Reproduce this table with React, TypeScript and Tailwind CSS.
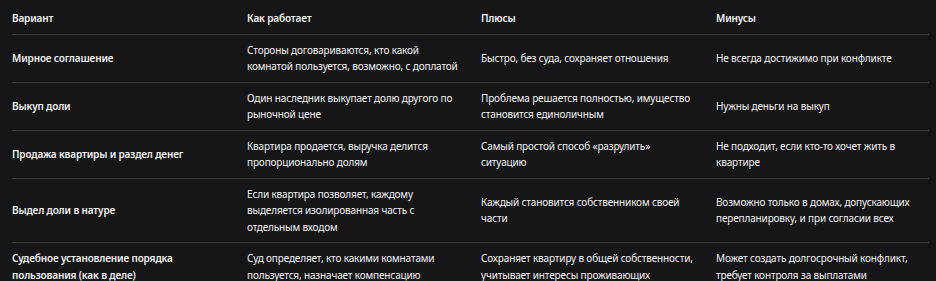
import React from 'react'

// each cell is a list of lines, matching the wrapping in the original view
type Cell = string[]

type Row = {
  variant: Cell
  how: Cell
  pros: Cell
  cons: Cell
}

const rows: Row[] = [
  {
    variant: ['Мирное соглашение'],
    how: ['Стороны договариваются, кто какой', 'комнатой пользуется, возможно, с доплатой'],
    pros: ['Быстро, без суда, сохраняет отношения'],
    cons: ['Не всегда достижимо при конфликте'],
  },
  {
    variant: ['Выкуп доли'],
    how: ['Один наследник выкупает долю другого по', 'рыночной цене'],
    pros: ['Проблема решается полностью, имущество', 'становится единоличным'],
    cons: ['Нужны деньги на выкуп'],
  },
  {
    variant: ['Продажа квартиры и раздел денег'],
    how: ['Квартира продается, выручка делится', 'пропорционально долям'],
    pros: ['Самый простой способ «разрулить»', 'ситуацию'],
    cons: ['Не подходит, если кто-то хочет жить в', 'квартире'],
  },
  {
    variant: ['Выдел доли в натуре'],
    how: ['Если квартира позволяет, каждому', 'выделяется изолированная часть с', 'отдельным входом'],
    pros: ['Каждый становится собственником своей', 'части'],
    cons: ['Возможно только в домах, допускающих', 'перепланировку, и при согласии всех'],
  },
  {
    variant: ['Судебное установление порядка', 'пользования (как в деле)'],
    how: ['Суд определяет, кто какими комнатами', 'пользуется, назначает компенсацию'],
    pros: ['Сохраняет квартиру в общей собственности,', 'учитывает интересы проживающих'],
    cons: ['Может создать долгосрочный конфликт,', 'требует контроля за выплатами'],
  },
]

const headers = ['Вариант', 'Как работает', 'Плюсы', 'Минусы']

function Lines({ lines }: { lines: Cell }) {
  return (
    <>
      {lines.map((l) => (
        <span key={l} className="block whitespace-nowrap">
          {l}
        </span>
      ))}
    </>
  )
}

export default function App() {
  return (
    <div
      className="w-[936px] h-[281px] overflow-hidden bg-[#161618] text-[#f2f2f2] pl-3"
      style={{ fontFamily: '"Noto Sans", "Open Sans", sans-serif' }}
    >
      <table className="table-fixed border-collapse w-[917px] text-[10px] leading-[16.5px] tracking-[-0.15px]">
        <colgroup>
          <col className="w-[235px]" />
          <col className="w-[234px]" />
          <col className="w-[235px]" />
          <col className="w-[213px]" />
        </colgroup>
        <thead>
          <tr className="border-b border-[#3a3a3c]">
            {headers.map((h) => (
              <th key={h} className="text-left font-semibold pt-[10px] pb-[7px] pr-4 align-middle">
                {h}
              </th>
            ))}
          </tr>
        </thead>
        <tbody>
          {rows.map((r) => (
            <tr key={r.variant[0]} className="border-b border-[#3a3a3c]">
              <td className="font-semibold py-[7px] pr-4 align-middle">
                <Lines lines={r.variant} />
              </td>
              <td className="py-[7px] pr-4 align-middle">
                <Lines lines={r.how} />
              </td>
              <td className="py-[7px] pr-4 align-middle">
                <Lines lines={r.pros} />
              </td>
              <td className="py-[7px] pr-4 align-middle">
                <Lines lines={r.cons} />
              </td>
            </tr>
          ))}
        </tbody>
      </table>
    </div>
  )
}
